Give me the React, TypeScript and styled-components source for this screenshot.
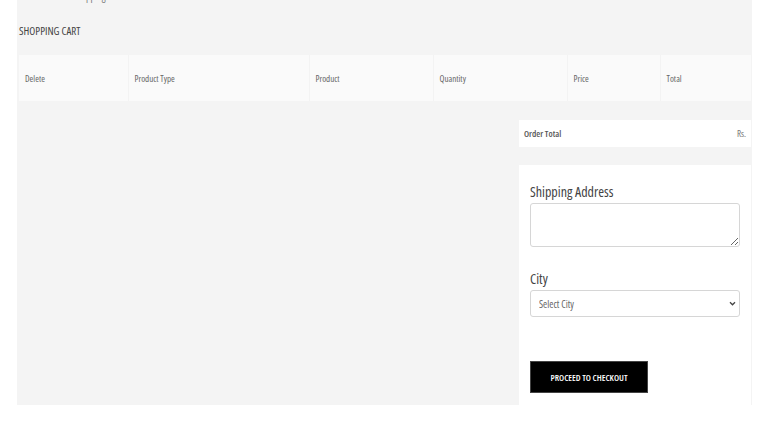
import styled, { createGlobalStyle } from "styled-components";

const GlobalStyle = createGlobalStyle`
  html, body {
    margin: 0;
    padding: 0;
    background: #ffffff;
  }
  body {
    font-family: "Open Sans", "Liberation Sans", sans-serif;
    font-stretch: 75%;
    color: #444;
  }
`;

const columns = [
  { label: "Delete", width: 109 },
  { label: "Product Type", width: 181 },
  { label: "Product", width: 124 },
  { label: "Quantity", width: 134 },
  { label: "Price", width: 93 },
  { label: "Total", width: 91 },
];

export default function App() {
  return (
    <>
      <GlobalStyle />
      <Page>
        <Crumb>Home / Shopping Cart</Crumb>
        <Title>SHOPPING CART</Title>
        <Table>
          <colgroup>
            {columns.map((c) => (
              <col key={c.label} style={{ width: c.width }} />
            ))}
          </colgroup>
          <thead>
            <tr>
              {columns.map((c) => (
                <HeadCell key={c.label}>{c.label}</HeadCell>
              ))}
            </tr>
          </thead>
        </Table>
        <Body>
          <div />
          <Side>
            <TotalBox>
              <strong>Order Total</strong>
              <span>Rs.</span>
            </TotalBox>
            <ShippingCard>
              <Label>Shipping Address</Label>
              <Address />
              <Label $top={22}>City</Label>
              <SelectWrap>
                <CitySelect defaultValue="">
                  <option value="">Select City</option>
                </CitySelect>
                <Chevron viewBox="0 0 8 6" aria-hidden="true">
                  <path d="M1 1.5 L4 4.5 L7 1.5" fill="none" stroke="#444" strokeWidth="1.6" />
                </Chevron>
              </SelectWrap>
              <CheckoutButton>PROCEED TO CHECKOUT</CheckoutButton>
            </ShippingCard>
          </Side>
        </Body>
      </Page>
    </>
  );
}

const Page = styled.div`
  margin-left: 17px;
  width: 732px;
  height: 405px;
  padding: 0 1px 0 2px;
  background: #f4f4f4;
  display: flex;
  flex-direction: column;
  overflow: hidden;
`;

const Crumb = styled.div`
  font-size: 10px;
  line-height: 10px;
  margin: -9px 0 0 26px;
  color: #777;
`;

const Title = styled.h1`
  margin: 23px 0 0 0;
  font-size: 11px;
  line-height: 14px;
  font-weight: 500;
  color: #444;
`;

const Table = styled.table`
  margin-top: 17px;
  width: 732px;
  border-collapse: collapse;
  table-layout: fixed;
`;

const HeadCell = styled.th`
  box-sizing: border-box;
  height: 46px;
  padding: 0 0 0 6px;
  background: #fafafa;
  border-left: 1px solid #f3f3f3;
  text-align: left;
  font-size: 9px;
  font-weight: 400;
  color: #666;
  &:first-child {
    border-left: none;
  }
`;

const Body = styled.div`
  flex: 1;
  display: grid;
  grid-template-columns: 1fr 232px;
  margin-top: 19px;
`;

const Side = styled.div`
  display: flex;
  flex-direction: column;
  gap: 18px;
`;

const TotalBox = styled.div`
  height: 27px;
  background: #ffffff;
  display: flex;
  align-items: center;
  justify-content: space-between;
  padding: 0 5px;
  font-size: 9px;
  color: #777;
  strong {
    font-weight: 600;
    color: #555;
  }
`;

const ShippingCard = styled.div`
  flex: 1;
  background: #ffffff;
  padding: 17px 11px 0 11px;
  display: flex;
  flex-direction: column;
  align-items: flex-start;
`;

const Label = styled.label<{ $top?: number }>`
  margin-top: ${(p) => p.$top ?? 0}px;
  font-size: 14px;
  line-height: 20px;
  color: #444;
`;

const Address = styled.textarea`
  box-sizing: border-box;
  width: 210px;
  height: 44px;
  margin: 1px 0 0 0;
  border: 1px solid #d6d6d6;
  border-radius: 3px;
  resize: vertical;
  font-family: inherit;
`;

const SelectWrap = styled.div`
  position: relative;
  margin-top: 1px;
  width: 210px;
  height: 27px;
`;

const CitySelect = styled.select`
  appearance: none;
  box-sizing: border-box;
  width: 100%;
  height: 100%;
  padding: 0 8px;
  border: 1px solid #d6d6d6;
  border-radius: 3px;
  background: #fff;
  font-family: inherit;
  font-stretch: 75%;
  font-size: 10px;
  color: #666;
`;

const Chevron = styled.svg`
  position: absolute;
  right: 4px;
  top: 11px;
  width: 7px;
  height: 5px;
  pointer-events: none;
`;

const CheckoutButton = styled.button`
  margin-top: 44px;
  width: 118px;
  height: 32px;
  background: #000;
  color: #fff;
  border: 1px solid #444;
  font-family: inherit;
  font-stretch: 75%;
  font-size: 9px;
  font-weight: 600;
  cursor: pointer;
`;
